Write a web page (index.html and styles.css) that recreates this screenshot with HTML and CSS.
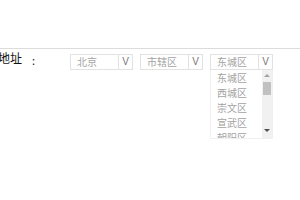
FILE: index.html
```html
<!DOCTYPE html>
<html lang="zh">
<head>
    <meta charset="UTF-8">
    <title>地址</title>
    <link rel="stylesheet" href="styles.css">
</head>
<body>
    <div class="address-form">
        <div class="form-row">
            <span class="row-label">地址</span>
            <span class="row-colon">:</span>
            <div class="select-wrap">
                <div class="select-box">
                    <span class="select-text">北京</span>
                    <span class="select-arrow">V</span>
                </div>
            </div>
            <div class="select-wrap">
                <div class="select-box">
                    <span class="select-text">市辖区</span>
                    <span class="select-arrow">V</span>
                </div>
            </div>
            <div class="select-wrap">
                <div class="select-box">
                    <span class="select-text">东城区</span>
                    <span class="select-arrow">V</span>
                </div>
                <div class="select-list">
                    <ul class="options">
                        <li>东城区</li>
                        <li>西城区</li>
                        <li>崇文区</li>
                        <li>宣武区</li>
                        <li>朝阳区</li>
                    </ul>
                    <div class="scrollbar">
                        <span class="scroll-up"></span>
                        <span class="scroll-thumb"></span>
                        <span class="scroll-down"></span>
                    </div>
                </div>
            </div>
        </div>
    </div>
</body>
</html>
```

FILE: styles.css
```css
* {
    margin: 0;
    padding: 0;
    box-sizing: border-box;
}

body {
    font-family: "Noto Sans CJK SC", "Liberation Sans", sans-serif;
    background: white;
}

.address-form {
    margin-top: 48px;
    border-top: 1px solid #dcdcdc;
}

.form-row {
    display: flex;
    align-items: flex-start;
    padding-top: 1px;
}

.row-label {
    margin-left: -2px;
    font-size: 12px;
    line-height: 16px;
    color: #111;
    width: 34px;
}

.row-colon {
    font-size: 11px;
    line-height: 20px;
    color: #111;
    width: 38px;
}

.select-wrap {
    display: flex;
    flex-direction: column;
    width: 63px;
    margin-top: 4px;
    margin-right: 7px;
}

.select-box {
    display: flex;
    height: 16px;
    border: 1px solid #e2e2e2;
    font-size: 10px;
    line-height: 14px;
}

.select-text {
    width: 48px;
    padding-left: 6px;
    color: #a3a3a3;
    border-right: 1px solid #e2e2e2;
}

.select-arrow {
    flex: 1;
    text-align: center;
    color: #777;
    font-family: "Liberation Sans", sans-serif;
    font-size: 10px;
}

.select-list {
    display: flex;
    height: 69px;
    overflow: hidden;
    border: 1px solid #f0f0f0;
    border-top: none;
}

.options {
    list-style: none;
    flex: 1;
}

.options li {
    height: 15px;
    line-height: 15px;
    padding-left: 6px;
    font-size: 10px;
    color: #a3a3a3;
}

.scrollbar {
    width: 10px;
    background: #f1f1f1;
    display: flex;
    flex-direction: column;
    align-items: center;
}

.scroll-up {
    margin-top: 4px;
    width: 0;
    height: 0;
    border-left: 3px solid transparent;
    border-right: 3px solid transparent;
    border-bottom: 3px solid #a3a3a3;
}

.scroll-thumb {
    margin-top: 5px;
    width: 8px;
    height: 13px;
    background: #c1c1c1;
}

.scroll-down {
    margin-top: auto;
    margin-bottom: 6px;
    width: 0;
    height: 0;
    border-left: 3px solid transparent;
    border-right: 3px solid transparent;
    border-top: 3px solid #505050;
}
```
